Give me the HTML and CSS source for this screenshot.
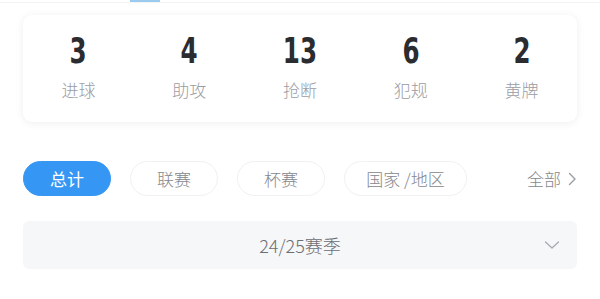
FILE: index.html
```html
<!DOCTYPE html>
<html lang="zh">
<head>
<meta charset="utf-8">
<link rel="stylesheet" href="styles.css">
</head>
<body>
<div class="topbar"><div class="indicator"></div></div>
<div class="card">
  <div class="stat"><div class="num">3</div><div class="label">进球</div></div>
  <div class="stat"><div class="num">4</div><div class="label">助攻</div></div>
  <div class="stat"><div class="num">13</div><div class="label">抢断</div></div>
  <div class="stat"><div class="num">6</div><div class="label">犯规</div></div>
  <div class="stat"><div class="num">2</div><div class="label">黄牌</div></div>
</div>
<div class="tabs">
  <div class="pill active">总计</div>
  <div class="pill">联赛</div>
  <div class="pill">杯赛</div>
  <div class="pill wide">国家 /地区</div>
  <div class="more">全部<svg class="chev-r" width="10" height="14" viewBox="0 0 10 14"><path d="M2.5 1.5 L8 7 L2.5 12.5" fill="none" stroke="#9a9ca2" stroke-width="1.4" stroke-linecap="round" stroke-linejoin="round"/></svg></div>
</div>
<div class="season">
  <span class="season-text">24/25赛季</span>
  <svg class="chev-d" width="16" height="10" viewBox="0 0 16 10"><path d="M1.5 2 L8 8 L14.5 2" fill="none" stroke="#a8aab0" stroke-width="1.3" stroke-linecap="round" stroke-linejoin="round"/></svg>
</div>
</body>
</html>
```
FILE: styles.css
```css
html, body {
  margin: 0;
  padding: 0;
  background: #ffffff;
  font-family: "Noto Sans CJK SC", "Noto Sans", sans-serif;
}
.topbar {
  height: 2px;
  border-bottom: 1px solid #f3f4f6;
  position: relative;
}
.indicator {
  position: absolute;
  left: 130px;
  top: 0;
  width: 30px;
  height: 2px;
  background: #9ccbf0;
}
.card {
  margin: 12px 23px 0;
  height: 107px;
  background: #fff;
  border-radius: 9px;
  box-shadow: 0 1px 8px rgba(0, 0, 0, 0.07);
  display: grid;
  grid-template-columns: repeat(5, 1fr);
  align-items: start;
}
.stat {
  display: flex;
  flex-direction: column;
  align-items: center;
  padding-top: 15px;
}
.num {
  font-family: "DejaVu Sans Condensed", "DejaVu Sans", sans-serif;
  font-weight: bold;
  font-size: 35px;
  line-height: 42px;
  color: #2b2c30;
  transform: scaleX(0.78);
}
.label {
  font-size: 17px;
  line-height: 24px;
  margin-top: 6px;
  font-weight: 300;
  color: #9a9ca3;
}
.tabs {
  margin: 39px 23px 0;
  display: flex;
  align-items: center;
  gap: 19px;
}
.pill {
  width: 86px;
  height: 33px;
  border: 1px solid #f0f1f3;
  border-radius: 18px;
  display: flex;
  align-items: center;
  justify-content: center;
  font-size: 17px;
  font-weight: 300;
  color: #85878d;
}
.pill.active {
  background: #3597f3;
  border-color: #3597f3;
  color: #ffffff;
  font-weight: 400;
}
.pill.wide {
  width: 121px;
}
.more {
  margin-left: auto;
  display: flex;
  align-items: center;
  gap: 6px;
  font-size: 17px;
  font-weight: 300;
  color: #85878d;
}
.season {
  margin: 25px 23px 0;
  height: 48px;
  background: #f6f7f9;
  border-radius: 6px;
  position: relative;
  display: flex;
  align-items: center;
  justify-content: center;
}
.season-text {
  font-size: 18px;
  font-weight: 300;
  color: #6c6e74;
}
.chev-d {
  position: absolute;
  right: 17px;
  top: 19px;
}
```
